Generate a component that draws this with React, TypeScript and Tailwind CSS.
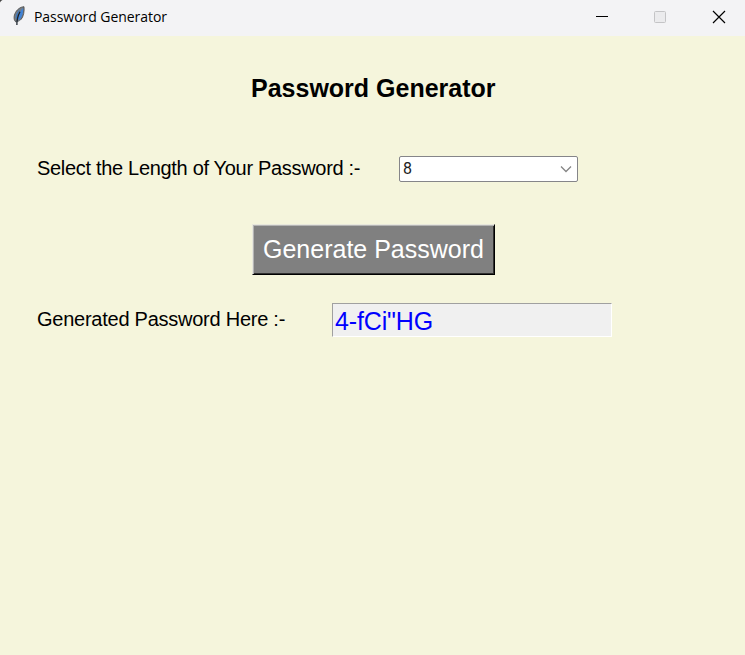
export default function App() {
  return (
    <div className="flex h-[655px] w-[745px] flex-col bg-[#f5f5dc] font-['Liberation_Sans',Arial,sans-serif] text-black">
      <header className="relative flex h-9 shrink-0 items-center bg-[#f3f3f5] pl-3">
        <svg className="absolute top-0 left-0" width="4" height="4" viewBox="0 0 4 4">
          <path d="M0 0H2.5L1 1L0 2.5Z" fill="#444" />
        </svg>
        <svg className="mb-[4px] h-5 w-4 shrink-0" viewBox="0 0 16 20">
          <path d="M4.4 16.5C1.7 14.5 1.5 11 2.9 7.8C4.4 3.8 8.4 .8 12 .7C12.5 5 11.7 10.5 8.9 13.7C7.6 15.2 6.2 15.8 4.4 16.5Z" fill="#777d84" />
          <path d="M5.4 14C6 9 8 5 11.3 1.8C11.4 6 10.4 11 8 13.3Z" fill="#4183d5" />
          <path d="M3.6 12C3.6 9 5 5.5 8.5 3C6.5 6 5.3 9.5 4.6 13Z" fill="#3f78bb" />
          <path d="M4.9 19C4.7 13.5 6 9.5 8 5.8" fill="none" stroke="#18202a" strokeWidth="1.3" />
          <path d="M4.4 16.5C1.7 14.5 1.5 11 2.9 7.8C4.4 3.8 8.4 .8 12 .7C12.5 5 11.7 10.5 8.9 13.7" fill="none" stroke="#454545" strokeWidth=".8" />
        </svg>
        <h1 className="mb-[2px] ml-1.5 whitespace-nowrap font-['Open_Sans',sans-serif] text-sm tracking-[-0.05px]">Password Generator</h1>
        <div className="mb-[2px] ml-auto flex items-center">
          <svg width="149" height="34" viewBox="0 0 149 34" fill="none" stroke="#000">
            <path d="M0 16.5H12" />
            <rect x="58.5" y="11.5" width="11" height="11" rx="1" fill="#ebebed" stroke="#c4c4c6" />
            <path d="M117 11L129 23M129 11L117 23" strokeWidth="1.2" />
          </svg>
        </div>
      </header>
      <main className="flex flex-col">
        <h2 className="mt-9 ml-[251px] h-8 whitespace-nowrap text-[25px] leading-8 font-bold">Password Generator</h2>
        <div className="mt-[51px] flex h-[28px] items-center pl-[37px]">
          <label className="mb-[3px] w-[362px] whitespace-nowrap text-xl tracking-[-0.31px]">Select the Length of Your Password :-</label>
          <div className="flex h-[26px] w-[179px] items-center justify-between rounded-[2px] border border-[#858589] bg-white pr-[5px] pl-[3px]">
            <span className="font-[Roboto,sans-serif] text-base tracking-normal text-[#222]">8</span>
            <svg width="12" height="8" viewBox="0 0 12 8" fill="none" stroke="#858585" strokeWidth="1.3">
              <path d="M1 1.5L6 6.5L11 1.5" />
            </svg>
          </div>
        </div>
        <button className="mt-[41px] ml-[252px] h-[51px] w-[243px] border border-[#e8e8dc] border-r-black border-b-black bg-[#808080] text-[25px] whitespace-nowrap text-white shadow-[inset_1px_1px_0_#b4b4b4,inset_-1px_-1px_0_#303030]">Generate Password</button>
        <div className="mt-7 flex h-[34px] items-center pl-[37px]">
          <label className="mb-[3px] w-[295px] whitespace-nowrap text-xl tracking-[-0.25px]">Generated Password Here :-</label>
          <output className="h-[34px] w-[280px] border border-white border-t-[#a0a0a0] border-l-[#a0a0a0] bg-[#f0f0f0] px-0.5 text-[25px] leading-[34px] tracking-[-0.15px] text-[#0000ff]">4-fCi"HG</output>
        </div>
      </main>
    </div>
  );
}
